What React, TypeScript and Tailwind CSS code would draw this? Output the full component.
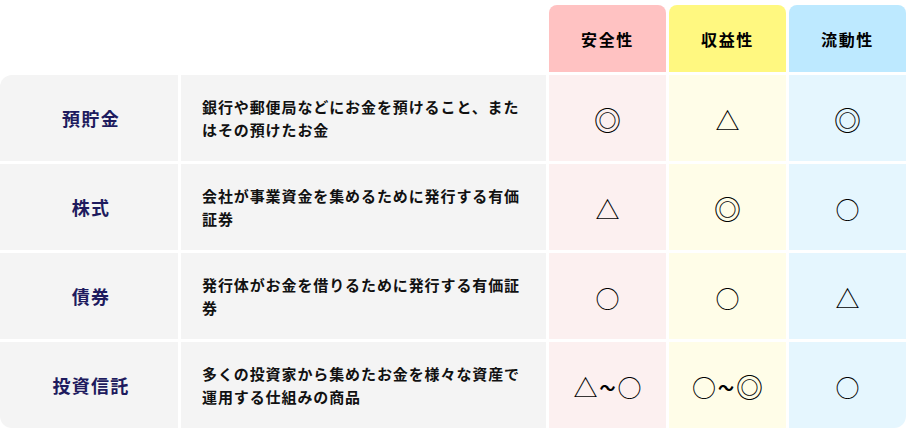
import React from "react";

const font = { fontFamily: '"Noto Sans CJK JP", "Noto Sans", sans-serif' };

const rows = [
  { name: "預貯金", desc: "銀行や郵便局などにお金を預けること、またはその預けたお金", v: ["◎", "△", "◎"] },
  { name: "株式", desc: "会社が事業資金を集めるために発行する有価証券", v: ["△", "◎", "○"] },
  { name: "債券", desc: "発行体がお金を借りるために発行する有価証券", v: ["○", "○", "△"] },
  { name: "投資信託", desc: "多くの投資家から集めたお金を様々な資産で運用する仕組みの商品", v: ["△～○", "○～◎", "○"] },
];

function Glyph({ g }: { g: string }) {
  if (g === "◎") return <span className="text-[27px] leading-none text-black">◎</span>;
  return <span className="text-[24px] leading-none text-black">{g}</span>;
}

function Sym({ s }: { s: string }) {
  const parts = s.split("～");
  return (
    <div className="flex items-center justify-center pt-[3px] font-normal">
      {parts.map((p, i) => (
        <React.Fragment key={i}>
          {i > 0 && <span className="text-[16px] font-bold leading-none mx-[2px] text-black">～</span>}
          <Glyph g={p} />
        </React.Fragment>
      ))}
    </div>
  );
}

export default function App() {
  const cellBg = ["bg-[#fcf0f0]", "bg-[#fffde8]", "bg-[#e5f6fe]"];
  return (
    <div className="w-[910px] h-[431px] bg-white" style={font}>
      <div className="pt-[5px] grid grid-cols-[178px_365px_117px_117px_117px] gap-[3px] grid-rows-[67px_86px_86px_86px_86px]">
        <div />
        <div />
        <div className="bg-[#ffc2c2] rounded-t-[8px] flex items-center justify-center text-[16px] font-bold tracking-[0.1em] text-black">安全性</div>
        <div className="bg-[#fff880] rounded-t-[8px] flex items-center justify-center text-[16px] font-bold tracking-[0.1em] text-black">収益性</div>
        <div className="bg-[#bde9ff] rounded-t-[8px] flex items-center justify-center text-[16px] font-bold tracking-[0.1em] text-black">流動性</div>
        {rows.map((r, ri) => (
          <React.Fragment key={r.name}>
            <div
              className={
                "bg-[#f4f4f4] flex items-center justify-center pl-[4px] text-[18px] font-bold tracking-[0.07em] text-[#1e1b5e] " +
                (ri === 0 ? "rounded-tl-[12px]" : "") +
                (ri === rows.length - 1 ? "rounded-bl-[12px]" : "")
              }
            >
              {r.name}
            </div>
            <div className="bg-[#f4f4f4] flex items-center pl-[21px] pr-[18px] text-[15px] font-bold leading-[23px] tracking-[0.9px] text-[#111]">
              {r.desc}
            </div>
            {r.v.map((s, i) => (
              <div
                key={i}
                className={
                  cellBg[i] +
                  " flex items-center justify-center " +
                  (i === 2 && ri === rows.length - 1 ? "rounded-br-[12px]" : "")
                }
              >
                <Sym s={s} />
              </div>
            ))}
          </React.Fragment>
        ))}
      </div>
    </div>
  );
}
